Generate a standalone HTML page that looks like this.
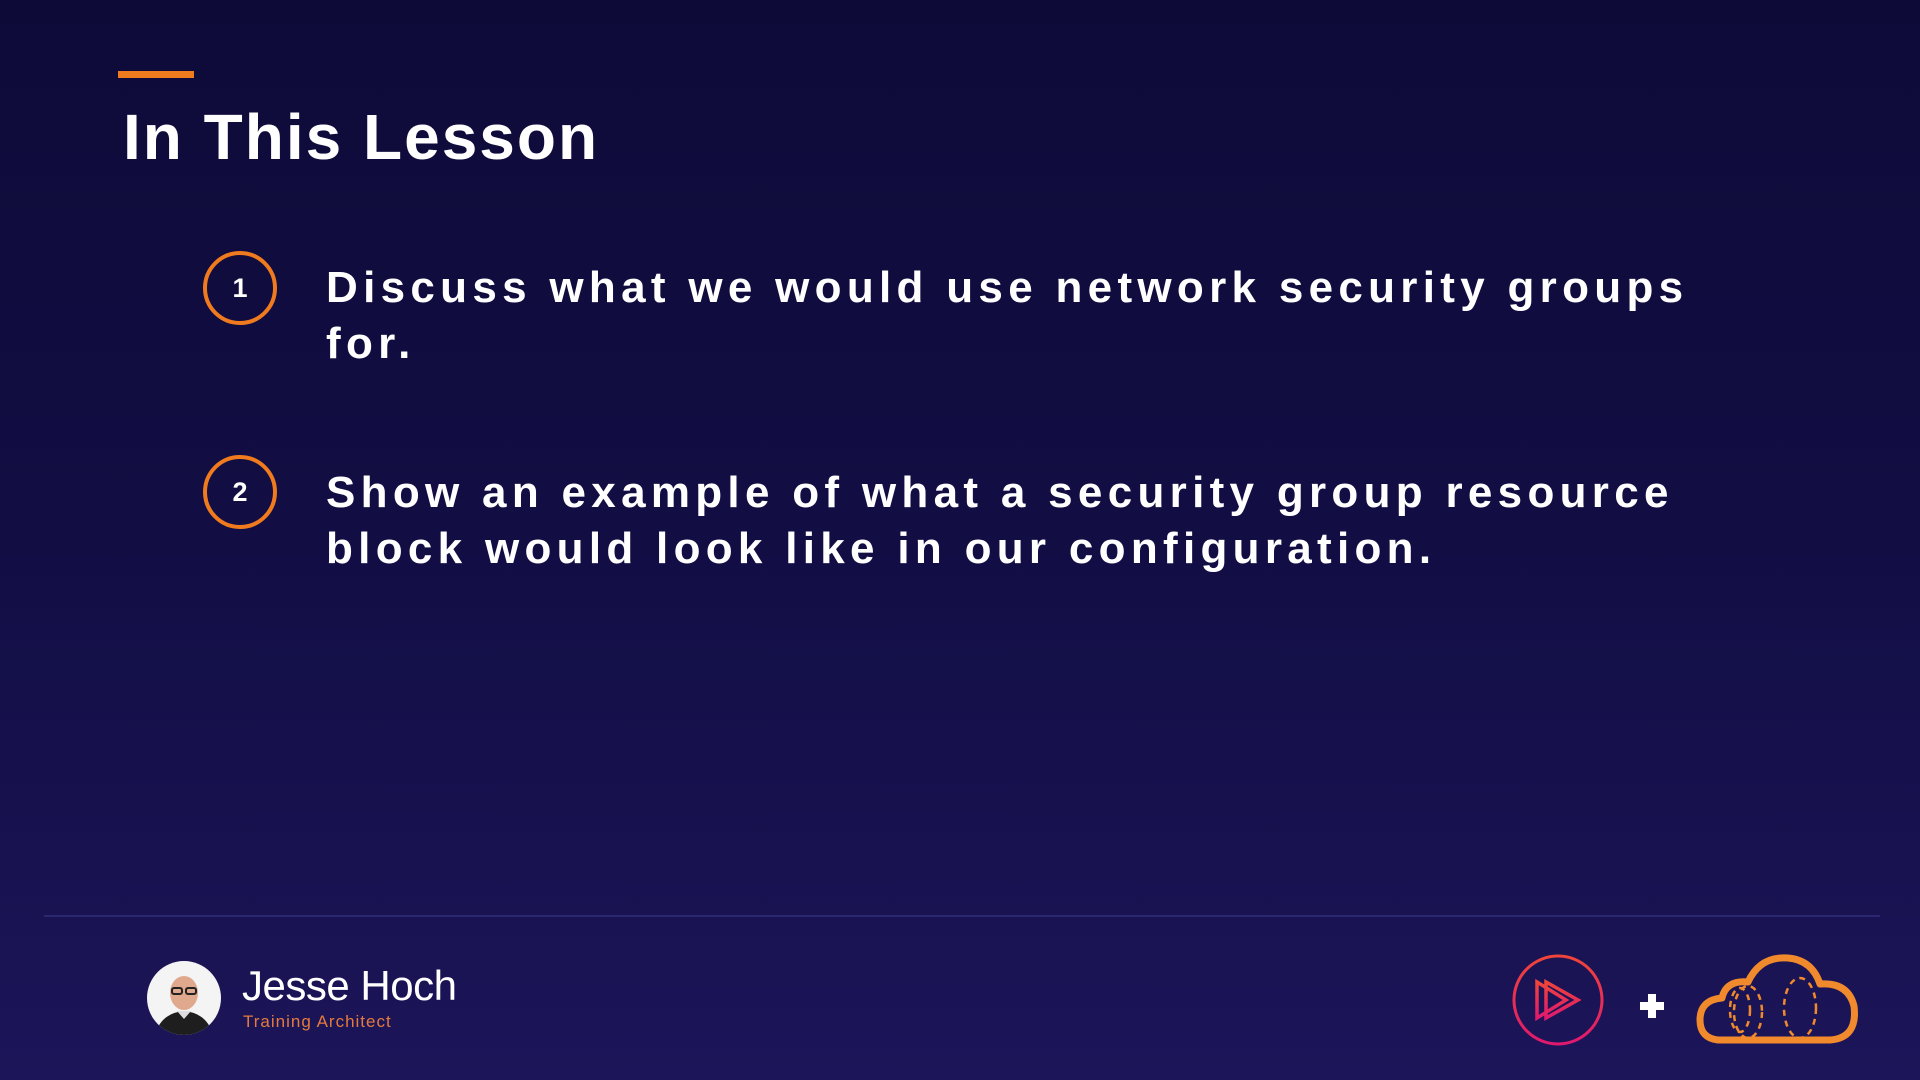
<!DOCTYPE html>
<html><head><meta charset="utf-8"><style>
html,body{margin:0;padding:0}
body{width:1920px;height:1080px;overflow:hidden;position:relative;background:linear-gradient(180deg,#0e0a38 0%,#120e44 50%,#1c1559 100%);font-family:"Liberation Sans",sans-serif;color:#fff}
.bar{position:absolute;left:118px;top:71px;width:76px;height:7px;background:#f07b1e}
h1{position:absolute;left:123px;top:97px;margin:0;font-size:64px;font-weight:bold;letter-spacing:2px;line-height:80px}
.item{position:absolute;left:326px;font-size:44px;font-weight:bold;letter-spacing:5.3px;line-height:56px}
.num{position:absolute;width:74px;height:74px;border:4px solid #f07b1e;border-radius:50%;box-sizing:border-box;font-size:27px;font-weight:bold;text-align:center;line-height:66px}
.div{position:absolute;left:44px;top:915px;width:1836px;height:2px;background:#2c2870}
.av{position:absolute;left:147px;top:961px;width:74px;height:74px;border-radius:50%;background:#f4f4f4;overflow:hidden}
.name{position:absolute;left:242px;top:963px;font-size:42px;line-height:46px;letter-spacing:-0.5px}
.role{position:absolute;left:243px;top:1012px;font-size:17px;color:#e57a3c;letter-spacing:1px}
</style></head><body>
<div class="bar"></div>
<h1>In This Lesson</h1>
<div class="num" style="left:203px;top:251px">1</div>
<div class="item" style="top:260px">Discuss what we would use network security groups<br>for.</div>
<div class="num" style="left:203px;top:455px">2</div>
<div class="item" style="top:465px">Show an example of what a security group resource<br>block would look like in our configuration.</div>
<div class="div"></div>
<div class="av"><svg width="74" height="74" viewBox="0 0 74 74">
<path d="M8 74 Q14 52 37 50 Q60 52 66 74Z" fill="#1e1e1e"/>
<path d="M30 50 L37 58 L44 50Z" fill="#ddd"/>
<ellipse cx="37" cy="32" rx="14" ry="17" fill="#e0a88c"/>
<rect x="25" y="27" width="10" height="6" rx="2" fill="none" stroke="#222" stroke-width="2"/>
<rect x="39" y="27" width="10" height="6" rx="2" fill="none" stroke="#222" stroke-width="2"/>
</svg></div>
<div class="name">Jesse Hoch</div>
<div class="role">Training Architect</div>
<svg style="position:absolute;left:1508px;top:950px" width="100" height="100" viewBox="0 0 100 100">
<defs><linearGradient id="g" x1="0" y1="0" x2="0" y2="1"><stop offset="0" stop-color="#f0453a"/><stop offset="1" stop-color="#e0196e"/></linearGradient></defs>
<circle cx="50" cy="50" r="44" fill="none" stroke="url(#g)" stroke-width="3"/>
<path d="M29 32 L29 68 L58 50Z M38 32 L38 68 L70 50Z" fill="none" stroke="url(#g)" stroke-width="3.5" stroke-linejoin="miter"/>
</svg>
<svg style="position:absolute;left:1638px;top:992px" width="28" height="28" viewBox="0 0 28 28"><path d="M10 2h8v8h8v8h-8v8h-8v-8h-8v-8h8z" fill="#fff"/></svg>
<svg style="position:absolute;left:1696px;top:950px" width="164" height="96" viewBox="0 0 164 96">
<path d="M22 90 Q4 88 4 70 Q4 50 26 48 Q30 30 52 32 Q64 6 92 8 Q116 10 124 34 Q152 32 158 56 Q162 88 134 90 Z" fill="none" stroke="#f08a2c" stroke-width="7" stroke-linejoin="round"/>
<g fill="none" stroke="#f08a2c" stroke-width="2.5" stroke-dasharray="6 5">
<ellipse cx="52" cy="62" rx="14" ry="26"/><ellipse cx="44" cy="60" rx="10" ry="22"/><ellipse cx="104" cy="58" rx="16" ry="30"/>
</g></svg>
</body></html>
